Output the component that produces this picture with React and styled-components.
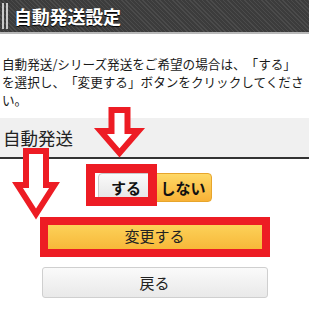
import React from "react";
import styled, { createGlobalStyle } from "styled-components";

const Global = createGlobalStyle`
  html, body { margin: 0; padding: 0; background: #fff; }
  body { font-family: "Noto Sans CJK JP", "Noto Sans", sans-serif; color: #222; }
`;

const Page = styled.div`
  position: relative;
  width: 309px;
  height: 336px;
  overflow: hidden;
`;

const Header = styled.div`
  height: 32px;
  display: flex;
  align-items: center;
  gap: 6px;
  padding-left: 2px;
  background: repeating-linear-gradient(45deg, #4b4b4b 0 1px, #3c3c3c 1px 3px);
  border-bottom: 2px solid #b8b8b8;
`;

const Bars = styled.div`
  display: flex;
  gap: 2px;
  height: 26px;
`;

const Bar = styled.span`
  width: 2px;
  height: 100%;
  background: #c8c8c8;
`;

const Title = styled.h1`
  margin: 0;
  font-size: 18px;
  font-weight: 700;
  color: #fff;
  letter-spacing: -0.2px;
  text-shadow: 0 1px 1px #000;
`;

const Desc = styled.p`
  margin: 21px 0 0;
  padding: 0 0 0 2px;
  font-size: 12.6px;
  line-height: 18px;
  color: #1a1a1a;
  text-spacing-trim: space-all;
  white-space: nowrap;
`;

const Section = styled.div`
  margin-top: 9px;
  height: 39px;
  display: flex;
  align-items: center;
  padding-left: 3px;
  background: #f0f0f0;
  border-bottom: 2px solid #333;
  font-size: 17.5px;
  color: #222;
`;

const Toggle = styled.div`
  display: flex;
  justify-content: center;
  margin-top: 14px;
`;

const ToggleBtn = styled.button`
  width: 57px;
  height: 29px;
  padding: 0;
  font-family: inherit;
  font-size: 15px;
  font-weight: 700;
  color: #111;
  border: 1px solid ${(p) => (p.$on ? "#c9c9c9" : "#e7a52c")};
  border-radius: ${(p) => (p.$left ? "4px 0 0 4px" : "0 4px 4px 0")};
  background: ${(p) =>
    p.$on
      ? "linear-gradient(#fafafa, #e4e4e4)"
      : "linear-gradient(#fed866, #f8b236)"};
`;

const Actions = styled.div`
  display: flex;
  flex-direction: column;
  align-items: center;
  gap: 16px;
  margin-top: 18px;
`;

const ActionBtn = styled.button`
  width: 226px;
  height: 31px;
  padding: 0;
  font-family: inherit;
  font-size: 15px;
  color: #222;
  border-radius: 3px;
  border: 1px solid ${(p) => (p.$primary ? "#e3a631" : "#cfcfcf")};
  background: ${(p) =>
    p.$primary
      ? "linear-gradient(#fdd55e, #f7b738)"
      : "linear-gradient(#fafafa, #e9e9e9)"};
`;

const RedBox = styled.div`
  position: absolute;
  box-sizing: border-box;
  border: ${(p) => p.$w}px solid #ed1c24;
  pointer-events: none;
`;

const ArrowSvg = styled.svg`
  position: absolute;
  left: 0;
  top: 0;
  pointer-events: none;
`;

function arrowPoints(cx, sw, hw, top, headY, tip) {
  return [
    [cx - sw, top],
    [cx + sw, top],
    [cx + sw, headY],
    [cx + hw, headY],
    [cx, tip],
    [cx - hw, headY],
    [cx - sw, headY],
  ]
    .map((p) => p.join(","))
    .join(" ");
}

export default function App() {
  return (
    <Page>
      <Global />
      <Header>
        <Bars>
          <Bar />
          <Bar />
        </Bars>
        <Title>自動発送設定</Title>
      </Header>
      <Desc>
        自動発送/シリーズ発送をご希望の場合は、「する」
        <br />
        を選択し、「変更する」ボタンをクリックしてくださ
        <br />
        い。
      </Desc>
      <Section>自動発送</Section>
      <Toggle>
        <ToggleBtn $on $left>する</ToggleBtn>
        <ToggleBtn>しない</ToggleBtn>
      </Toggle>
      <Actions>
        <ActionBtn $primary>変更する</ActionBtn>
        <ActionBtn>戻る</ActionBtn>
      </Actions>

      <RedBox $w={9} style={{ left: 86, top: 164, width: 71, height: 42 }} />
      <RedBox $w={8} style={{ left: 40, top: 217, width: 230, height: 40 }} />
      <ArrowSvg width="309" height="336" viewBox="0 0 309 336">
        <polygon
          points={arrowPoints(119.5, 8, 19, 110, 131, 153)}
          fill="#fff"
          stroke="#ed1c24"
          strokeWidth="6"
          strokeLinejoin="miter"
        />
        <polygon
          points={arrowPoints(36, 10, 18.5, 151, 185, 214)}
          fill="#fff"
          stroke="#ed1c24"
          strokeWidth="6"
          strokeLinejoin="miter"
        />
      </ArrowSvg>
    </Page>
  );
}
